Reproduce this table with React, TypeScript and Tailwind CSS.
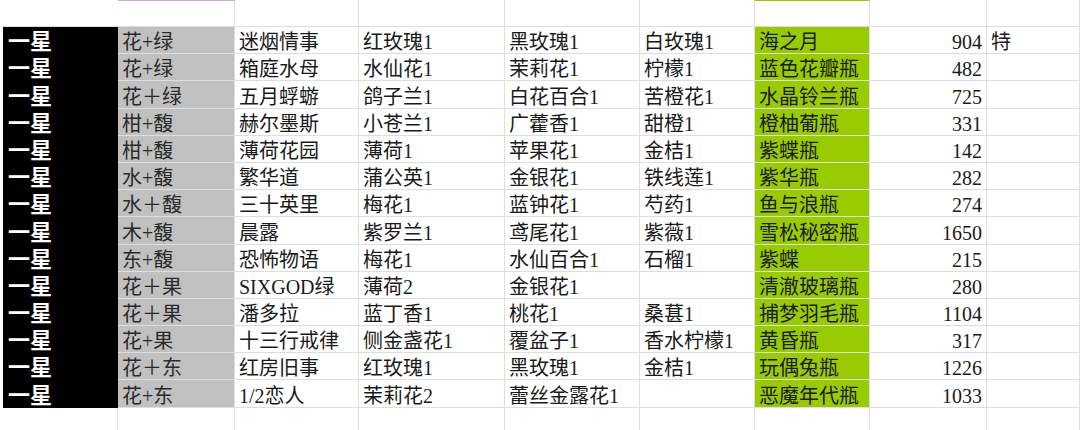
const rows = [
  ["花+绿", "迷烟情事", "红玫瑰1", "黑玫瑰1", "白玫瑰1", "海之月", "904", "特"],
  ["花+绿", "箱庭水母", "水仙花1", "茉莉花1", "柠檬1", "蓝色花瓣瓶", "482", ""],
  ["花＋绿", "五月蜉蝣", "鸽子兰1", "白花百合1", "苦橙花1", "水晶铃兰瓶", "725", ""],
  ["柑+馥", "赫尔墨斯", "小苍兰1", "广藿香1", "甜橙1", "橙柚葡瓶", "331", ""],
  ["柑+馥", "薄荷花园", "薄荷1", "苹果花1", "金桔1", "紫蝶瓶", "142", ""],
  ["水+馥", "繁华道", "蒲公英1", "金银花1", "铁线莲1", "紫华瓶", "282", ""],
  ["水＋馥", "三十英里", "梅花1", "蓝钟花1", "芍药1", "鱼与浪瓶", "274", ""],
  ["木+馥", "晨露", "紫罗兰1", "鸢尾花1", "紫薇1", "雪松秘密瓶", "1650", ""],
  ["东+馥", "恐怖物语", "梅花1", "水仙百合1", "石榴1", "紫蝶", "215", ""],
  ["花＋果", "SIXGOD绿", "薄荷2", "金银花1", "", "清澈玻璃瓶", "280", ""],
  ["花＋果", "潘多拉", "蓝丁香1", "桃花1", "桑葚1", "捕梦羽毛瓶", "1104", ""],
  ["花+果", "十三行戒律", "侧金盏花1", "覆盆子1", "香水柠檬1", "黄昏瓶", "317", ""],
  ["花＋东", "红房旧事", "红玫瑰1", "黑玫瑰1", "金桔1", "玩偶兔瓶", "1226", ""],
  ["花+东", "1/2恋人", "茉莉花2", "蕾丝金露花1", "", "恶魔年代瓶", "1033", ""],
];

const font = "font-['Liberation_Serif','Noto_Sans_CJK_SC',serif]";
const cols = "grid grid-cols-[115px_117px_124px_146px_135px_115px_115px_117px_1fr]";

function Cell({ children, className = "" }: { children?: React.ReactNode; className?: string }) {
  return (
    <div
      className={`flex h-[27.2px] items-end overflow-visible whitespace-nowrap border-r border-b border-[#dedede] px-[4px] pb-0 text-[20px] leading-[22px] text-[#1a1a1a] ${font} ${className}`}
    >
      {children}
    </div>
  );
}

export default function App() {
  return (
    <div className="h-[430px] w-[1080px] overflow-hidden bg-white pl-[3px]">
      <div className={cols}>
        <Cell className="h-[27px] border-r-white" />
        <Cell className="h-[27px] border-t border-t-[#c9a3ef]" />
        <Cell className="h-[27px]" />
        <Cell className="h-[27px]" />
        <Cell className="h-[27px]" />
        <Cell className="h-[27px]" />
        <Cell className="h-[27px] border-t border-t-[#99cc00]" />
        <Cell className="h-[27px]" />
        <Cell className="h-[27px]" />

        {rows.map((r, i) => (
          <div key={i} className="contents">
            <Cell className="border-black bg-black pl-[5px] font-['Liberation_Sans','Noto_Sans_CJK_SC',sans-serif] text-[22px] leading-[22px] font-bold text-white">
              一星
            </Cell>
            <Cell className="border-[#c0c0c0] bg-[#c0c0c0] text-[#2a2a2a]">{r[0]}</Cell>
            <Cell>{r[1]}</Cell>
            <Cell>{r[2]}</Cell>
            <Cell>{r[3]}</Cell>
            <Cell>{r[4]}</Cell>
            <Cell className="border-[#99cc00] bg-[#99cc00]">{r[5]}</Cell>
            <Cell className="justify-end pr-[4px]">{r[6]}</Cell>
            <Cell>{r[7]}</Cell>
          </div>
        ))}

        <Cell className="border-r-[#dedede]" />
        <Cell />
        <Cell />
        <Cell />
        <Cell />
        <Cell />
        <Cell />
        <Cell />
        <Cell />
      </div>
    </div>
  );
}
